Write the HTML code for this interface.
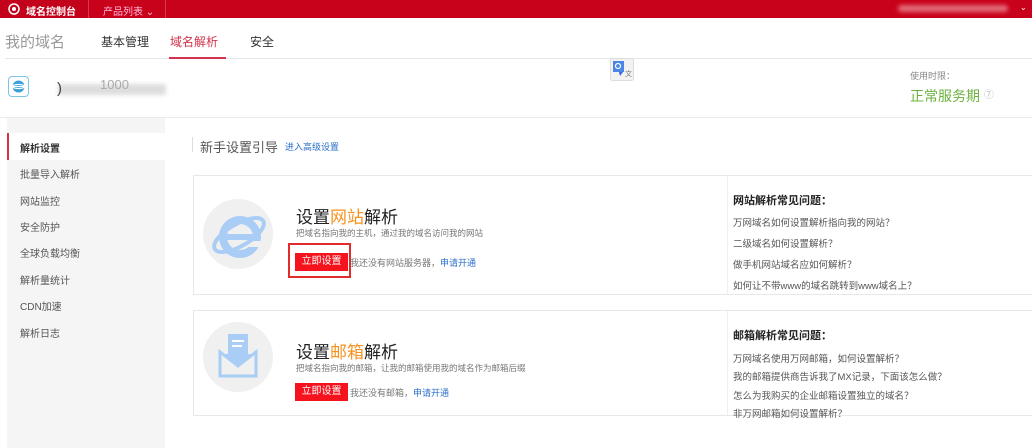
<!DOCTYPE html>
<html><head><meta charset="utf-8"><style>
*{margin:0;padding:0;box-sizing:border-box}
body{width:1032px;height:448px;overflow:hidden;background:#fff;font-family:"Liberation Sans","Noto Sans CJK SC",sans-serif;color:#333;position:relative}
.a{position:absolute;white-space:nowrap}
.top{left:0;top:0;width:1032px;height:18px;background:#c9021b}
.side{left:7px;top:118px;width:158px;height:330px;background:#f5f5f5}
.si{left:20px;font-size:10px;color:#555}
.card{border:1px solid #e8e8e8;background:#fff}
.q{font-size:9.5px;color:#555;left:733px}
.btn{background:#f5131e;color:#fff;font-size:10px;text-align:center;line-height:18px;height:18px;width:53px}
</style></head><body>
<div class="a top"></div>
<div class="a" style="left:0;top:0;width:88px;height:18px;background:#c4011a"></div>
<div class="a" style="left:88px;top:0;width:1px;height:18px;background:#d83a4a"></div>
<div class="a" style="left:165px;top:0;width:1px;height:18px;background:#d83a4a"></div>
<svg class="a" style="left:8px;top:3px" width="12" height="12" viewBox="0 0 12 12"><circle cx="6" cy="6" r="5" fill="none" stroke="#fff" stroke-width="1.5"/><circle cx="6" cy="6" r="2" fill="#fff"/></svg>
<div class="a" style="left:26px;top:3px;font-size:10px;color:#fff;font-weight:bold">域名控制台</div>
<div class="a" style="left:103px;top:3px;font-size:10px;color:#fbd">产品列表 ⌄</div>
<div class="a" style="left:898px;top:5px;width:110px;height:7px;background:#e26b78;border-radius:4px;filter:blur(2px)"></div>
<div class="a" style="left:1020px;top:3px;font-size:8px;color:#fff">⌄</div>

<div class="a" style="left:5px;top:31px;font-size:15px;color:#999">我的域名</div>
<div class="a" style="left:101px;top:33px;font-size:12px;color:#333">基本管理</div>
<div class="a" style="left:170px;top:33px;font-size:12px;color:#d2324a">域名解析</div>
<div class="a" style="left:250px;top:33px;font-size:12px;color:#333">安全</div>
<div class="a" style="left:5px;top:58px;width:1027px;height:1px;background:#e5e5e5"></div>
<div class="a" style="left:169px;top:57px;width:57px;height:2px;background:#d2324a"></div>

<div class="a" style="left:8px;top:76px;width:21px;height:21px;border:1.5px solid #7fc3e8;border-radius:4px"></div>
<svg class="a" style="left:11px;top:79px" width="15" height="15" viewBox="0 0 15 15"><circle cx="7.5" cy="7.5" r="6" fill="#3aa0dc"/><ellipse cx="7.5" cy="7.5" rx="6" ry="2" fill="none" stroke="#fff" stroke-width="1.2"/><path d="M2 7.5h11" stroke="#fff"/></svg>
<div class="a" style="left:58px;top:84px;width:108px;height:11px;background:#ddd;filter:blur(2px)"></div>
<div class="a" style="left:57px;top:80px;font-size:15px;color:#444">)</div>
<div class="a" style="left:100px;top:77px;font-size:13px;color:#aaa">1000</div>
<svg class="a" style="left:610px;top:58px" width="24" height="23" viewBox="0 0 24 23"><rect x="0.5" y="0.5" width="23" height="22" rx="2" fill="#f2f2f2" stroke="#ddd"/><rect x="3" y="3" width="11" height="11" fill="#4a86e8"/><path d="M9 14l1 4 3-4z" fill="#3367d6"/><text x="15" y="18" font-size="7" fill="#777">文</text><circle cx="8" cy="8" r="2.5" fill="none" stroke="#fff" stroke-width="1.2"/></svg>
<div class="a" style="left:910px;top:69px;font-size:9px;color:#888">使用时限：</div>
<div class="a" style="left:910px;top:86px;font-size:14px;color:#6cb33e">正常服务期 <span style="font-size:10px;color:#bbb;vertical-align:top">⑦</span></div>
<div class="a" style="left:0;top:117px;width:1032px;height:1px;background:#eaeaea"></div>

<div class="a side"></div>
<div class="a" style="left:7px;top:133px;width:158px;height:27px;background:#fff;border-left:2px solid #d2324a"></div>
<div class="a si" style="top:140px;color:#333;font-weight:bold">解析设置</div>
<div class="a si" style="top:166px">批量导入解析</div>
<div class="a si" style="top:193px">网站监控</div>
<div class="a si" style="top:219px">安全防护</div>
<div class="a si" style="top:245px">全球负载均衡</div>
<div class="a si" style="top:272px">解析量统计</div>
<div class="a si" style="top:298px">CDN加速</div>
<div class="a si" style="top:325px">解析日志</div>

<div class="a" style="left:192px;top:137px;width:1px;height:15px;background:#ddd"></div>
<div class="a" style="left:200px;top:137px;font-size:13px;color:#555">新手设置引导</div>
<div class="a" style="left:285px;top:140px;font-size:9px;color:#2a6fc9">进入高级设置</div>

<div class="a card" style="left:193px;top:175px;width:845px;height:120px"></div>
<div class="a" style="left:727px;top:176px;width:1px;height:118px;background:#efefef"></div>
<div class="a" style="left:203px;top:199px;width:70px;height:70px;border-radius:50%;background:#f0f0f0"></div>
<svg class="a" style="left:203px;top:199px" width="70" height="70" viewBox="0 0 70 70"><circle cx="37" cy="38" r="17" fill="none" stroke="#a9cdf5" stroke-width="8"/><rect x="21" y="35" width="32" height="6" fill="#a9cdf5"/><rect x="40" y="42" width="18" height="6" fill="#f0f0f0"/><ellipse cx="36" cy="36" rx="28" ry="11" transform="rotate(-30 36 36)" fill="none" stroke="#a9cdf5" stroke-width="4"/></svg>
<div class="a" style="left:296px;top:203px;font-size:17px;color:#222">设置<span style="color:#f7921e">网站</span>解析</div>
<div class="a" style="left:296px;top:227px;font-size:8.5px;color:#777">把域名指向我的主机，通过我的域名访问我的网站</div>
<div class="a" style="left:288px;top:243px;width:63px;height:35px;border:2px solid #e32b2b"></div>
<div class="a btn" style="left:295px;top:253px">立即设置</div>
<div class="a" style="left:350px;top:256px;font-size:9px;color:#777">我还没有网站服务器，<span style="color:#2a6fc9">申请开通</span></div>
<div class="a" style="left:733px;top:192px;font-size:11px;font-weight:bold;color:#222">网站解析常见问题：</div>
<div class="a q" style="top:215px">万网域名如何设置解析指向我的网站？</div>
<div class="a q" style="top:236px">二级域名如何设置解析？</div>
<div class="a q" style="top:257px">做手机网站域名应如何解析？</div>
<div class="a q" style="top:278px">如何让不带www的域名跳转到www域名上？</div>

<div class="a card" style="left:193px;top:310px;width:845px;height:106px"></div>
<div class="a" style="left:727px;top:311px;width:1px;height:104px;background:#efefef"></div>
<div class="a" style="left:203px;top:322px;width:70px;height:70px;border-radius:50%;background:#f0f0f0"></div>
<svg class="a" style="left:203px;top:322px" width="70" height="70" viewBox="0 0 70 70"><rect x="25" y="12" width="20" height="22" fill="#a9cdf5"/><path d="M29 19h12M29 24h10" stroke="#fff" stroke-width="2"/><path d="M17 30v24h36V30l-18 14z" fill="none" stroke="#a9cdf5" stroke-width="3"/><path d="M20 32l15 12 15-12z" fill="#a9cdf5"/></svg>
<div class="a" style="left:296px;top:338px;font-size:17px;color:#222">设置<span style="color:#f7921e">邮箱</span>解析</div>
<div class="a" style="left:296px;top:362px;font-size:8.5px;color:#777">把域名指向我的邮箱，让我的邮箱使用我的域名作为邮箱后缀</div>
<div class="a btn" style="left:295px;top:383px">立即设置</div>
<div class="a" style="left:350px;top:386px;font-size:9px;color:#777">我还没有邮箱，<span style="color:#2a6fc9">申请开通</span></div>
<div class="a" style="left:733px;top:327px;font-size:11px;font-weight:bold;color:#222">邮箱解析常见问题：</div>
<div class="a q" style="top:351px">万网域名使用万网邮箱，如何设置解析？</div>
<div class="a q" style="top:369px">我的邮箱提供商告诉我了MX记录，下面该怎么做？</div>
<div class="a q" style="top:388px">怎么为我购买的企业邮箱设置独立的域名？</div>
<div class="a q" style="top:406px">非万网邮箱如何设置解析？</div>
</body></html>
